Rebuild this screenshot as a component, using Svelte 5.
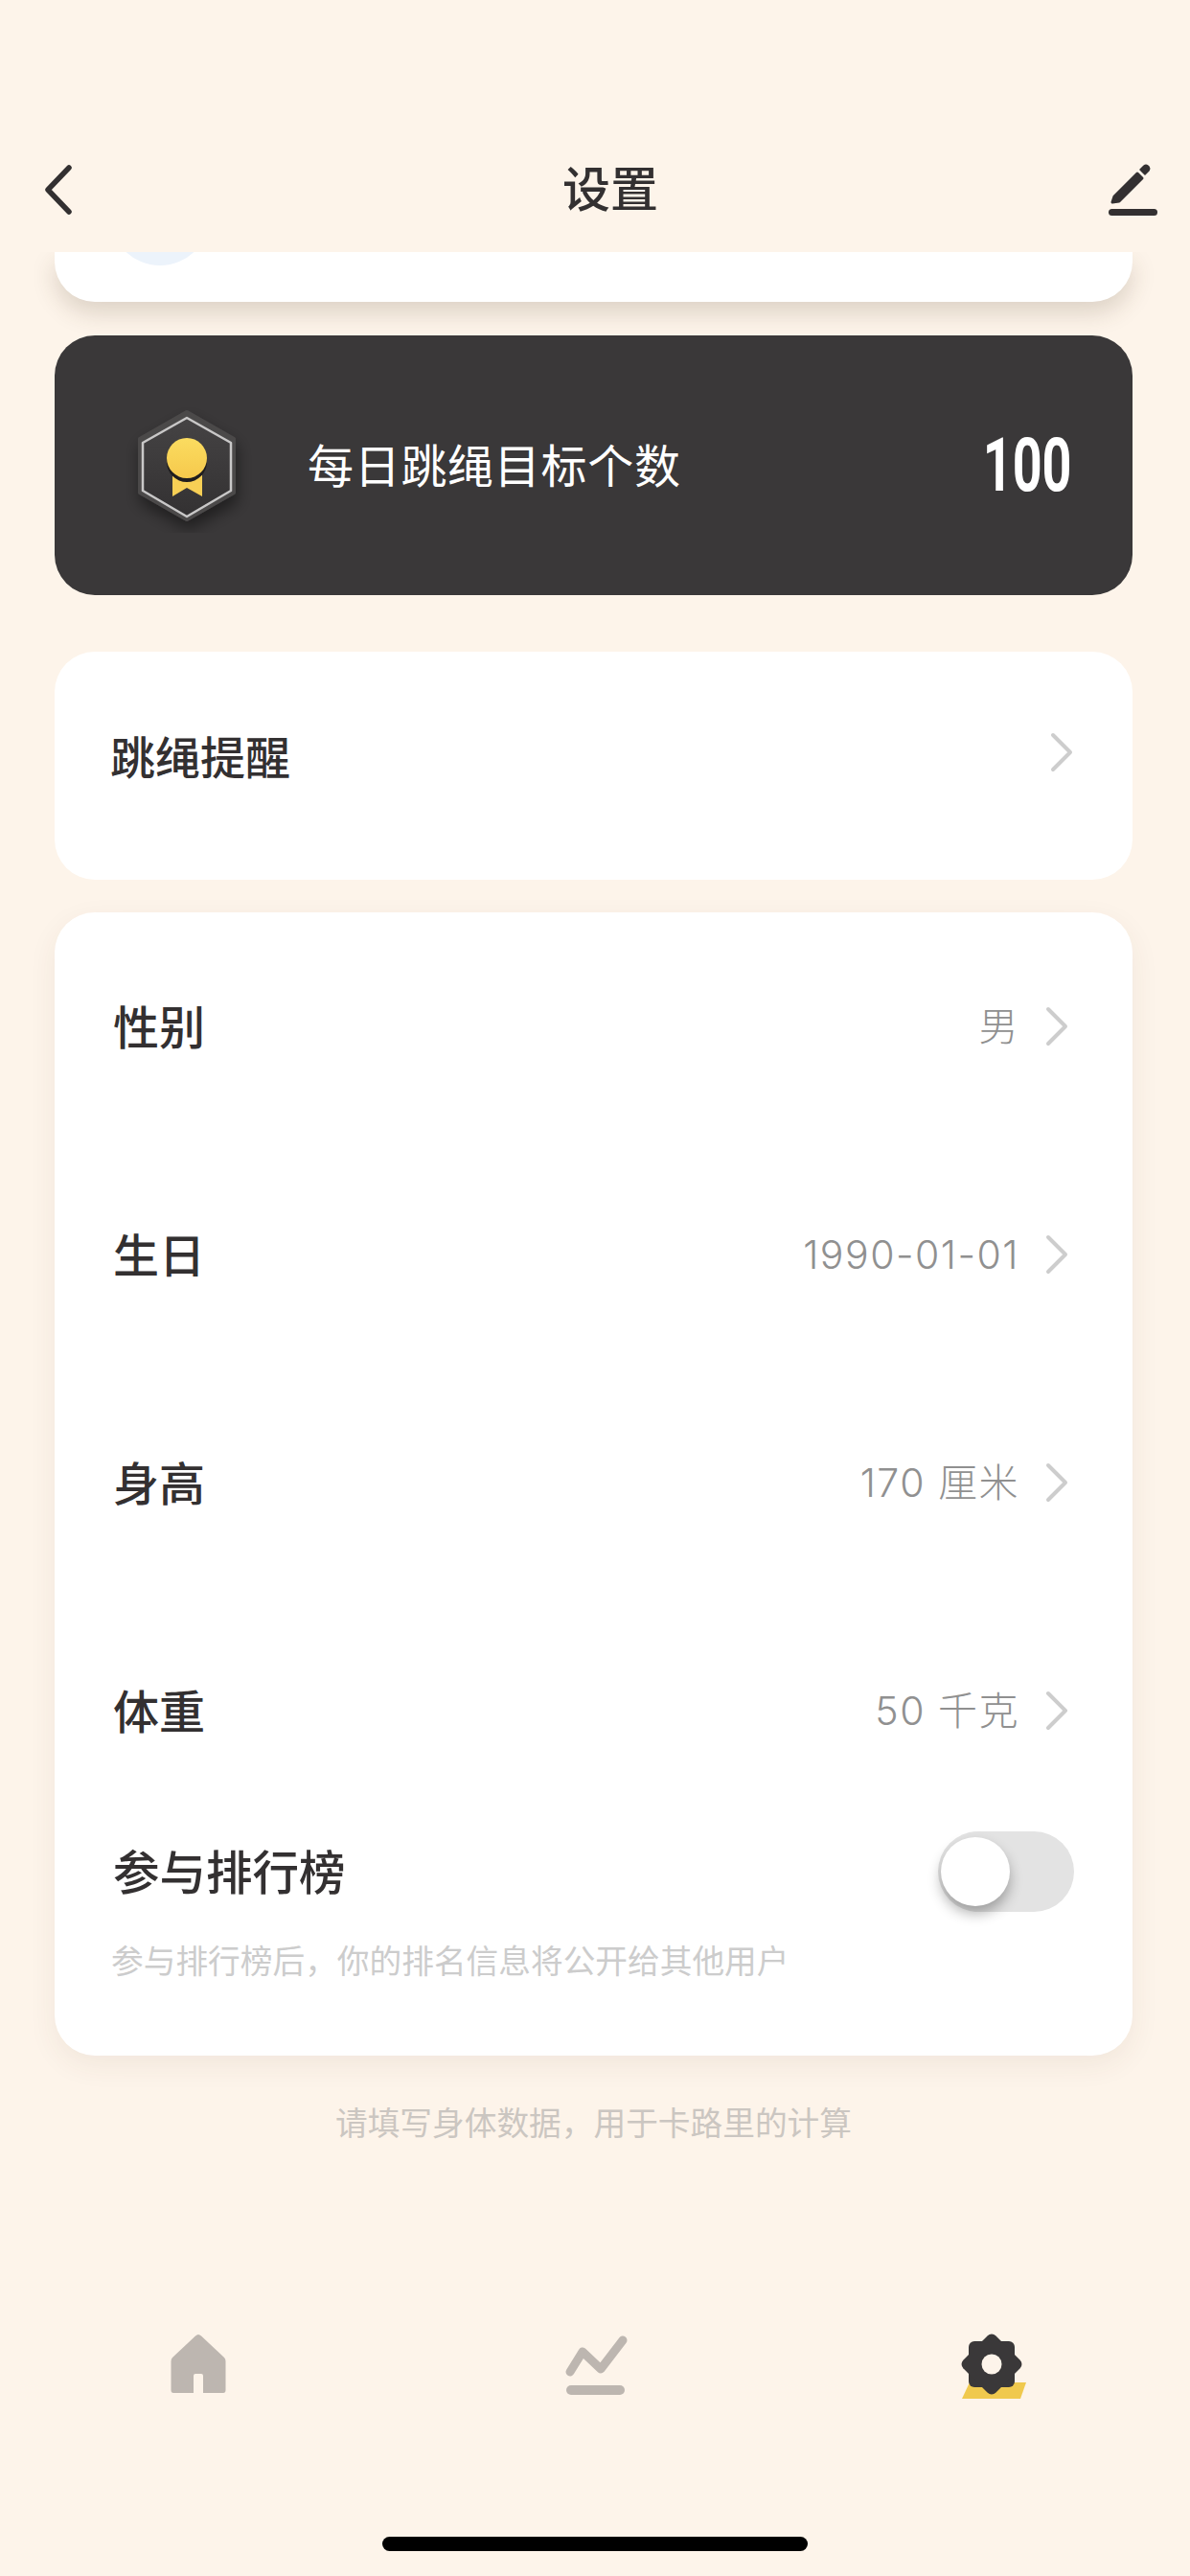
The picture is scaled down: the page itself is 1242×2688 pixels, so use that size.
<script>
  const rows = [
    { label: '性别', value: '男' },
    { label: '生日', value: '1990-01-01' },
    { label: '身高', value: '170 厘米' },
    { label: '体重', value: '50 千克' }
  ];
</script>

<div class="page">
  <header class="nav">
    <svg class="back" width="30" height="52" viewBox="0 0 30 52">
      <path d="M26 3 L4 26 L26 49" fill="none" stroke="#333031" stroke-width="5.500" stroke-linecap="round" stroke-linejoin="round" />
    </svg>
    <h1>设置</h1>
    <svg class="edit" width="56" height="60" viewBox="0 0 56 60">
      <path d="M9 43 L11 37 L35 13 L40 18 L16 42 Z" fill="#333031" stroke="#333031" stroke-width="3" stroke-linejoin="round" />
      <path d="M38 9 L42 5 Q44 3.500 46 5 L47 6 Q48.500 8 47 10 L43 14 Z" fill="#333031" stroke="#333031" stroke-width="1.500" stroke-linejoin="round" />
      <rect x="5" y="50" width="51" height="7" rx="3.500" fill="#333031" />
    </svg>
  </header>

  <main class="scroll">
    <div class="card profile-end">
      <span class="avatar"></span>
    </div>

    <section class="goal">
      <svg class="badge" width="140" height="140" viewBox="0 0 140 140">
        <defs>
          <linearGradient id="hexFill" x1="0" y1="0" x2="0" y2="1">
            <stop offset="0" stop-color="#454344" />
            <stop offset="1" stop-color="#333132" />
          </linearGradient>
          <linearGradient id="medal" x1="0" y1="0" x2="0" y2="1">
            <stop offset="0" stop-color="#fbdc60" />
            <stop offset="1" stop-color="#f6c94c" />
          </linearGradient>
          <filter id="hexShadow" x="-30%" y="-30%" width="160%" height="170%">
            <feDropShadow dx="2" dy="9" stdDeviation="8" flood-color="#000" flood-opacity="0.45" />
          </filter>
        </defs>
        <path d="M70 14 L119 42 L119 98 L70 126 L21 98 L21 42 Z" fill="#4b494a" stroke="#4b494a" stroke-width="4" stroke-linejoin="round" filter="url(#hexShadow)" />
        <path d="M70 20 L116 46 L116 96 L70 123 L24 96 L24 46 Z" fill="url(#hexFill)" stroke="#c9c8c8" stroke-width="2.500" stroke-linejoin="round" />
        <path d="M55 80 H86 V102 L70 93 L55 102 Z" fill="#f7cf55" />
        <circle cx="70" cy="66" r="21" fill="#1f1d1e" />
        <circle cx="70" cy="62" r="21" fill="url(#medal)" />
      </svg>
      <span class="goal-label">每日跳绳目标个数</span>
      <span class="goal-num">100</span>
    </section>

    <section class="card remind">
      <span class="label">跳绳提醒</span>
      <svg class="chev" width="24" height="42" viewBox="0 0 24 42">
        <path d="M3 3 L21 21 L3 39" fill="none" stroke="#cdcdcd" stroke-width="4" stroke-linecap="round" stroke-linejoin="round" />
      </svg>
    </section>

    <section class="card settings">
      {#each rows as row}
        <div class="row">
          <span class="label">{row.label}</span>
          <span class="value">{row.value}</span>
          <svg class="chev" width="24" height="42" viewBox="0 0 24 42">
            <path d="M3 3 L21 21 L3 39" fill="none" stroke="#cdcdcd" stroke-width="4" stroke-linecap="round" stroke-linejoin="round" />
          </svg>
        </div>
      {/each}
      <div class="rank">
        <span class="label">参与排行榜</span>
        <span class="switch"><span class="knob"></span></span>
      </div>
      <p class="hint">参与排行榜后，你的排名信息将公开给其他用户</p>
    </section>

    <p class="note">请填写身体数据，用于卡路里的计算</p>
  </main>

  <nav class="tabs">
    <svg width="80" height="80" viewBox="0 0 80 80">
      <path d="M40 9 Q41.500 9 43 10.500 L67 33 Q68.500 34.500 68.500 37 V67 Q68.500 70 66 70 H45 V52 Q45 50 43 50 H37 Q35 50 35 52 V70 H14 Q11.500 70 11.500 67 V37 Q11.500 34.500 13 33 L37 10.500 Q38.500 9 40 9 Z" fill="#bdb6b0" />
    </svg>
    <svg width="80" height="80" viewBox="0 0 80 80">
      <path d="M14 48 L27 27 L46 45 L69 15" fill="none" stroke="#bdb6b0" stroke-width="9" stroke-linecap="round" stroke-linejoin="round" />
      <rect x="10" y="62" width="61" height="10" rx="5" fill="#bdb6b0" />
    </svg>
    <svg width="80" height="80" viewBox="0 0 80 80">
      <path d="M17 59 H76 L70 76 H9 Z" fill="#f0c94e" />
      <rect x="16" y="16" width="48" height="48" rx="6" fill="#3a3839" />
      <rect x="16" y="16" width="48" height="48" rx="6" fill="#3a3839" transform="rotate(45 40 40)" />
      <circle cx="40" cy="40" r="10.500" fill="#fdf4ea" />
    </svg>
  </nav>

  <div class="home-bar"><span></span></div>
</div>

<style>
  :global(body) {
    margin: 0;
    background: #fdf4ea;
  }

  .page {
    position: relative;
    width: 1242px;
    height: 2688px;
    display: flex;
    flex-direction: column;
    background: #fdf4ea;
    color: #333031;
    font-family: "Noto Sans CJK SC", "Noto Sans", sans-serif;
    overflow: hidden;
  }

  .nav {
    height: 263px;
    flex: none;
    box-sizing: border-box;
    padding: 172px 34px 0 46px;
    display: flex;
    justify-content: space-between;
    align-items: flex-start;
  }

  .nav h1 {
    margin: -11px 0 0 46px;
    font-size: 50px;
    line-height: 66px;
    font-weight: 500;
  }

  .edit {
    margin-top: -4px;
  }

  .scroll {
    flex: none;
    height: 2080px;
    box-sizing: border-box;
    padding: 0 60px 0 57px;
    overflow: hidden;
    display: flex;
    flex-direction: column;
  }

  .card {
    background: #fff;
    border-radius: 42px;
    flex: none;
  }

  .profile-end {
    height: 52px;
    border-radius: 0 0 42px 42px;
    position: relative;
    overflow: hidden;
    box-shadow: 0 12px 24px rgba(80, 60, 40, 0.18);
  }

  .avatar {
    position: absolute;
    left: 58px;
    top: -90px;
    width: 104px;
    height: 104px;
    border-radius: 50%;
    background: #ecf3fb;
  }

  .goal {
    margin-top: 35px;
    height: 271px;
    flex: none;
    box-sizing: border-box;
    padding: 0 63px 0 68px;
    border-radius: 42px;
    background: #3a3839;
    color: #fff;
    display: flex;
    align-items: center;
  }

  .goal-label {
    margin: 0 0 6px 56px;
    font-size: 48px;
    letter-spacing: 0.700px;
  }

  .goal-num {
    margin-left: auto;
    font-family: Roboto, sans-serif;
    font-size: 77px;
    font-weight: 700;
    transform: scaleX(0.7);
    transform-origin: right center;
  }

  .remind {
    margin-top: 59px;
    height: 238px;
    box-sizing: border-box;
    padding: 0 62px 18px 58px;
    display: flex;
    align-items: center;
    justify-content: space-between;
  }

  .remind .label {
    font-size: 47px;
    margin-bottom: 6px;
  }

  .remind .chev {
    margin-bottom: 10px;
  }

  .label {
    font-size: 48px;
    font-weight: 500;
    color: #333031;
    margin-bottom: 5px;
  }

  .settings {
    margin-top: 34px;
    height: 1193px;
    box-sizing: border-box;
    padding: 0 67px 0 61px;
    box-shadow: 0 10px 30px rgba(80, 60, 40, 0.07);
  }

  .row {
    height: 238px;
    display: flex;
    align-items: center;
  }

  .value {
    margin: 0 27px 0 auto;
    font-family: Inter, "Noto Sans CJK SC", sans-serif;
    font-size: 41px;
    line-height: 56px;
    font-weight: 300;
    letter-spacing: 1.500px;
    color: #909090;
  }

  .rank {
    margin-top: 7px;
    height: 84px;
    display: flex;
    align-items: center;
    justify-content: space-between;
    margin-right: -6px;
  }

  .rank .label {
    font-size: 48.500px;
  }

  .switch {
    position: relative;
    width: 142px;
    height: 84px;
    border-radius: 42px;
    background: #e3e3e3;
  }

  .knob {
    position: absolute;
    left: 3px;
    top: 6px;
    width: 72px;
    height: 72px;
    border-radius: 50%;
    background: #fff;
    box-shadow: 0 8px 14px rgba(0, 0, 0, 0.3);
  }

  .hint {
    margin: 27px 0 0 -2px;
    font-size: 33.700px;
    line-height: 46px;
    color: #ccc;
  }

  .note {
    margin: 46px 0 0;
    font-size: 33.700px;
    line-height: 46px;
    color: #cbc6c1;
    text-align: center;
  }

  .tabs {
    position: absolute;
    left: 0;
    top: 2427px;
    width: 1242px;
    display: grid;
    grid-template-columns: repeat(3, 1fr);
    justify-items: center;
  }

  .home-bar {
    position: absolute;
    left: 0;
    top: 2647px;
    width: 1242px;
    display: flex;
    justify-content: center;
  }

  .home-bar span {
    width: 444px;
    height: 15px;
    border-radius: 8px;
    background: #000;
  }
</style>
